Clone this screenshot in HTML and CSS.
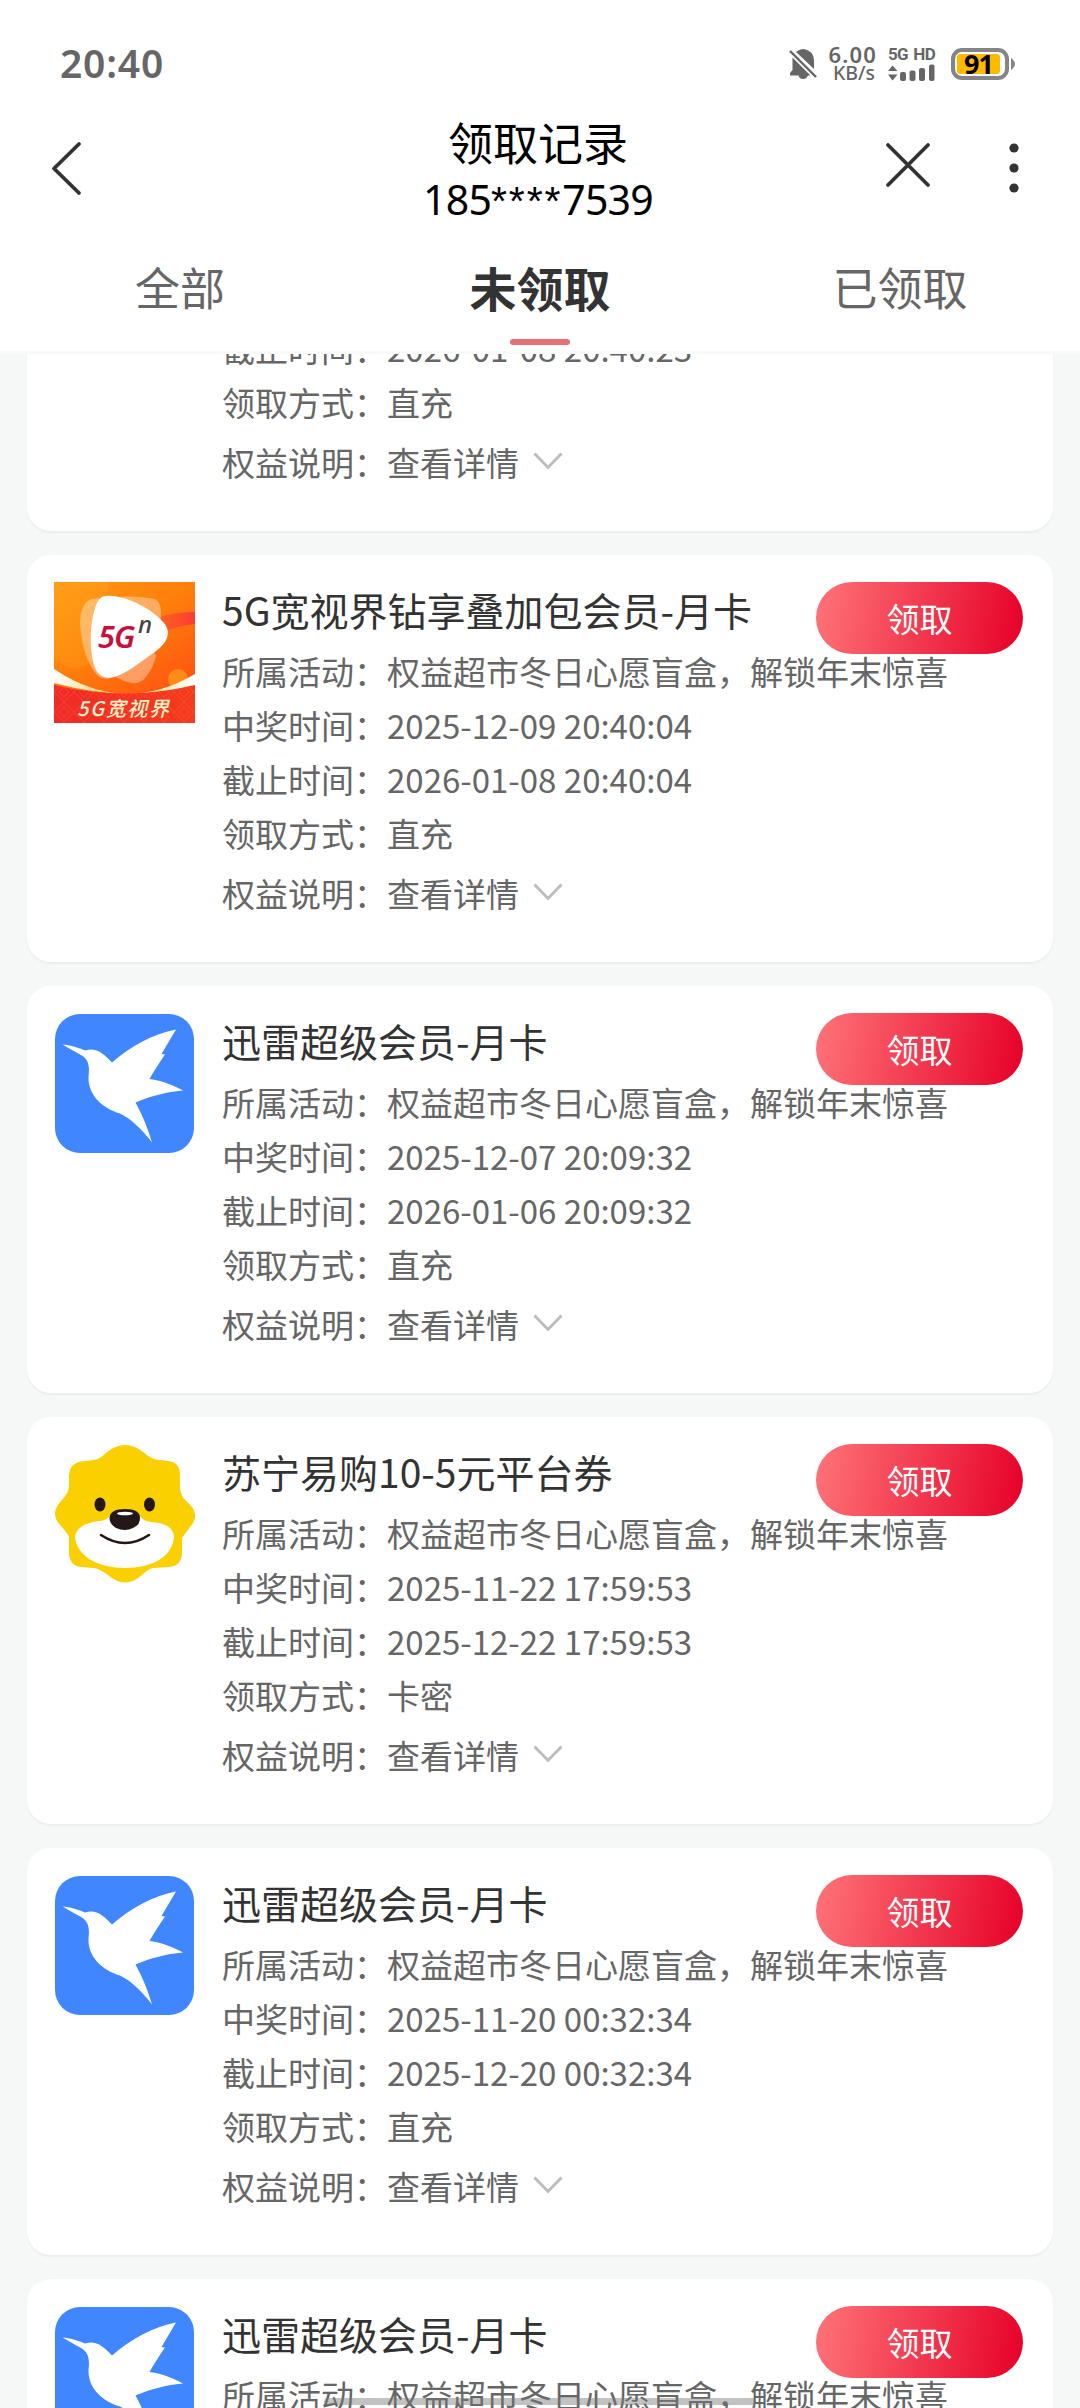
FILE: index.html
```html
<!DOCTYPE html>
<html lang="zh-CN">
<head>
<meta charset="utf-8">
<title>领取记录</title>
<link rel="stylesheet" href="styles.css">
</head>
<body>
<svg class="defs" aria-hidden="true">
  <defs>
    <symbol id="bird" viewBox="0 0 141 141">
      <rect x="1" y="1" width="139" height="139" rx="25" fill="#4086ff"/>
      <path fill="#fff" d="M8.500 31.500C17 32 25 35 31 37.500C42 34 49 40 58 49.500C77 33 99 21 122 16.500L107.500 41L111 41.500C106 49 100 58 95.500 66C109 68 119 72 129 77.500C112 79 97 83 81.500 89.500C89 103 94 116 98 129.500C87 115 77 106 66 100.500C48 95 34 82 34.500 64C36 52 34 46 27 42Q16 36 8.500 31.500Z"/>
    </symbol>
    <symbol id="chev" viewBox="0 0 30 18"><path d="M1.500 1.500L15 15.500L28.500 1.500" fill="none" stroke="#bcbcbc" stroke-width="2.900"/></symbol>
  </defs>
</svg>
<div class="screen">
  <header class="header">
    <div class="status">
      <span class="clock">20:40</span>
      <div class="indicators">
        <svg class="bell" viewBox="0 0 28 32"><path fill="#666" d="M6.500 4.500Q10 1 15 1Q24.500 3 25 12V21L7 4ZM3.500 9.500L21.500 27.500H19Q17.500 31 14 31Q10.500 31 9.500 27.500H1V25L3.500 22Z"/><path d="M1 3L27 29" stroke="#666" stroke-width="2.400"/></svg>
        <div class="speed"><b>6.00</b><span>KB/s</span></div>
        <div class="net">
          <div class="net-names"><span>5G</span><span>HD</span></div>
          <svg class="bars" viewBox="0 0 47 17" fill="#666"><path d="M0 7L4.500 1.500L9.500 7ZM0 10.500H9.500L4.500 16.500Z"/><rect x="12" y="8" width="6" height="9" rx="2"/><rect x="21.500" y="6.500" width="6" height="10.500" rx="2"/><rect x="31" y="4" width="6" height="13" rx="2"/><rect x="41" y="0.500" width="5.500" height="16.500" rx="2"/></svg>
        </div>
        <div class="battery"><span class="level">91</span></div>
        <svg class="tip" viewBox="0 0 4 12"><path d="M0 0Q4 3 4 6Q4 9 0 12Z" fill="#858585"/></svg>
      </div>
    </div>
    <nav class="nav">
      <svg class="back" viewBox="0 0 32 56"><path d="M28 4L3 28.500L28 53" fill="none" stroke="#333" stroke-width="3.800" stroke-linecap="round" stroke-linejoin="round"/></svg>
      <div class="heading"><h1>领取记录</h1><p>185<span class="mask">****</span>7539</p></div>
      <div class="actions">
        <svg class="close" viewBox="0 0 46 46"><path d="M3 3L43 43M43 3L3 43" stroke="#333" stroke-width="3.800" stroke-linecap="round"/></svg>
        <svg class="more" viewBox="0 0 10 52" fill="#333"><circle cx="5" cy="6" r="4.600"/><circle cx="5" cy="26" r="4.600"/><circle cx="5" cy="46" r="4.600"/></svg>
      </div>
    </nav>
    <div class="tabs"><span>全部</span><span class="active">未领取</span><span>已领取</span></div>
  </header>

  <main class="list">
    <article class="card partial">
      <div class="info">
        <p>截止时间：2026-01-08 20:40:23</p>
        <p>领取方式：直充</p>
        <p class="more-row">权益说明：查看详情<svg class="chev"><use href="#chev"/></svg></p>
      </div>
    </article>

    <article class="card">
      <svg class="logo" viewBox="0 0 141 141">
        <defs>
          <linearGradient id="orange" x1="0" y1="0" x2=".7" y2="1"><stop offset="0" stop-color="#ff9a16"/><stop offset=".5" stop-color="#ff7d0b"/><stop offset="1" stop-color="#ff4e13"/></linearGradient>
          <linearGradient id="ribbon"><stop offset="0" stop-color="#fff"/><stop offset=".4" stop-color="#ffd36b"/><stop offset=".75" stop-color="#ffe9a8"/><stop offset="1" stop-color="#fff"/></linearGradient>
          <linearGradient id="base"><stop offset="0" stop-color="#ef2a27"/><stop offset="1" stop-color="#f63b1b"/></linearGradient>
          <linearGradient id="streak"><stop offset="0" stop-color="#ff6a14" stop-opacity="0"/><stop offset="1" stop-color="#fb3b38"/></linearGradient>
          <pattern id="weave" width="20" height="20" patternUnits="userSpaceOnUse"><path d="M0 10L10 0L20 10L10 20ZM5 10L10 5L15 10L10 15Z" fill="none" stroke="#ff7052" stroke-opacity=".35"/></pattern>
        </defs>
        <path fill="url(#orange)" d="M0 0H141V141H0Z"/>
        <path fill="#ffb01d" opacity=".25" d="M0 0H55C50 30 30 50 40 78Q20 95 0 76Z"/>
        <path fill="url(#streak)" d="M60 55Q100 30 141 30V42Q105 45 70 75Z"/>
        <circle cx="124" cy="97" r="10" fill="#ffa01e" opacity=".7"/>
        <path fill="url(#ribbon)" d="M0 87Q70 134 141 92V106Q70 120 0 101Z"/>
        <path fill="url(#base)" d="M0 103Q70 120 141 103V141H0Z"/>
        <path fill="url(#weave)" d="M0 103Q70 120 141 103V141H0Z"/>
        <path fill="#fff" opacity=".35" d="M38 17Q26 20 26 43Q29 77 43 93Q52 101 65 92L103 56Q112 22 101 17Q78 12 38 17Z"/>
        <path fill="#fff" opacity=".35" d="M57 92Q82 108 91 96Q99 87 102 74L85 38L47 57Z"/>
        <path fill="#fff" d="M52 14C67 12 97 25 110 41C118 51 113 61 101 70C86 80 72 92 60 95C50 98 42 92 40 83C34 61 37 32 44 19Q47 14 52 14Z"/>
        <text class="logo-5g" x="44" y="66">5G</text><text class="logo-n" x="84" y="51">n</text>
        <text class="logo-name" x="23" y="134" textLength="92">5G宽视界</text>
      </svg>
      <div class="info">
        <h2>5G宽视界钻享叠加包会员-月卡</h2>
        <p>所属活动：权益超市冬日心愿盲盒，解锁年末惊喜</p>
        <p>中奖时间：2025-12-09 20:40:04</p>
        <p>截止时间：2026-01-08 20:40:04</p>
        <p>领取方式：直充</p>
        <p class="more-row">权益说明：查看详情<svg class="chev"><use href="#chev"/></svg></p>
      </div>
      <button class="claim">领取</button>
    </article>

    <article class="card">
      <svg class="logo"><use href="#bird"/></svg>
      <div class="info">
        <h2>迅雷超级会员-月卡</h2>
        <p>所属活动：权益超市冬日心愿盲盒，解锁年末惊喜</p>
        <p>中奖时间：2025-12-07 20:09:32</p>
        <p>截止时间：2026-01-06 20:09:32</p>
        <p>领取方式：直充</p>
        <p class="more-row">权益说明：查看详情<svg class="chev"><use href="#chev"/></svg></p>
      </div>
      <button class="claim">领取</button>
    </article>

    <article class="card">
      <svg class="logo" viewBox="0 0 141 141">
        <path fill="#fbd000" d="M53 8Q71 -6 89 8Q96 14 102 15.500L114 17Q126 18 126 31V43Q126 51 132 57Q148 70 136 83L128 94V110Q127 122 115 123L99 124Q94 125 88 131Q71 146 54 131Q46 125 40 124L27 123Q16 122 15 110V93Q14 90 7 82Q-5 70 7 57Q15 49 15 42V31Q16 19 27 17.500L40 16Q46 15 53 8Z"/>
        <path fill="#fff" d="M56 72Q51 77 45 77Q22 80 21 93C23 113 45 124 71 124C98 124 119 113 120 92Q118 79 97 78Q89 77 86 72Z"/>
        <ellipse cx="46" cy="60.500" rx="5.500" ry="7" fill="#231815"/><ellipse cx="95.500" cy="60.500" rx="5.500" ry="7" fill="#231815"/>
        <path fill="#231815" d="M55.500 74Q56 65 71 65Q86 65 86 74Q86 81 79 84Q71 88 62 84Q55.500 80 55.500 74Z"/>
        <ellipse cx="71" cy="69.500" rx="8" ry="1.800" fill="#fff"/>
        <path d="M47 91Q71 107 95 91" fill="none" stroke="#231815" stroke-width="2.600" stroke-linecap="round"/>
      </svg>
      <div class="info">
        <h2>苏宁易购10-5元平台券</h2>
        <p>所属活动：权益超市冬日心愿盲盒，解锁年末惊喜</p>
        <p>中奖时间：2025-11-22 17:59:53</p>
        <p>截止时间：2025-12-22 17:59:53</p>
        <p>领取方式：卡密</p>
        <p class="more-row">权益说明：查看详情<svg class="chev"><use href="#chev"/></svg></p>
      </div>
      <button class="claim">领取</button>
    </article>

    <article class="card">
      <svg class="logo"><use href="#bird"/></svg>
      <div class="info">
        <h2>迅雷超级会员-月卡</h2>
        <p>所属活动：权益超市冬日心愿盲盒，解锁年末惊喜</p>
        <p>中奖时间：2025-11-20 00:32:34</p>
        <p>截止时间：2025-12-20 00:32:34</p>
        <p>领取方式：直充</p>
        <p class="more-row">权益说明：查看详情<svg class="chev"><use href="#chev"/></svg></p>
      </div>
      <button class="claim">领取</button>
    </article>

    <article class="card">
      <svg class="logo"><use href="#bird"/></svg>
      <div class="info">
        <h2>迅雷超级会员-月卡</h2>
        <p>所属活动：权益超市冬日心愿盲盒，解锁年末惊喜</p>
      </div>
      <button class="claim">领取</button>
    </article>
  </main>
  <div class="home-bar"></div>
</div>
</body>
</html>
```
FILE: styles.css
```css
* { box-sizing: border-box; }
body { margin: 0; font-family: "Noto Sans CJK SC", sans-serif; background: #f6f8f8; }
h1, h2, p { margin: 0; font-weight: 400; }
svg { display: block; flex: none; }
.defs { position: absolute; width: 0; height: 0; }
.screen { position: relative; display: flex; flex-direction: column; width: 1080px; height: 2408px; overflow: hidden; }

.header { flex: none; height: 354px; background: #fff; border-bottom: 3px solid #f8fafa; }
.status { display: flex; justify-content: space-between; align-items: center; height: 128px; padding: 0 65px 0 60px; color: #666; font-family: "Noto Sans", sans-serif; }
.clock { font-size: 39px; font-weight: 600; line-height: 1; letter-spacing: .8px; padding-bottom: 4px; }
.indicators { display: flex; align-items: center; }
.bell { width: 28px; height: 32px; margin-right: 10px; }
.speed { display: flex; flex-direction: column; align-items: flex-end; width: 50px; margin-right: 11px; padding-bottom: 1px; }
.speed b { font-size: 22px; font-weight: 600; line-height: 19px; letter-spacing: 1.2px; }
.speed span { font-size: 19.500px; font-weight: 500; line-height: 18px; margin-right: 2px; }
.net { width: 47px; margin-right: 16px; padding-bottom: 1px; }
.net-names { display: flex; justify-content: space-between; font: 700 17px/17px Roboto, sans-serif; letter-spacing: -.7px; }
.bars { width: 47px; height: 17px; margin-top: 1px; }
.battery { display: flex; width: 58px; height: 32px; padding: 2px; border: 4px solid #858585; border-radius: 11px; }
.level { width: 43px; height: 20px; border-radius: 3px; background: #ffb900; color: #000; font-size: 27px; font-weight: 700; line-height: 20px; text-align: center; letter-spacing: -1px; }
.tip { width: 4px; height: 12px; margin-left: 2px; }

.nav { display: flex; justify-content: space-between; height: 104px; padding: 0 61px 0 51px; }
.back { width: 32px; height: 56px; margin-top: 12px; }
.heading { width: 300px; margin-left: 108px; text-align: center; color: #000; }
h1 { font-size: 45px; line-height: 60px; margin-top: -16px; }
.heading p { font-family: "Noto Sans", sans-serif; font-size: 41px; line-height: 50px; margin-top: 2px; letter-spacing: -.8px; }
.heading .mask { font-family: "Liberation Sans", sans-serif; letter-spacing: 1.850px; }
.actions { display: flex; width: 134px; justify-content: space-between; }
.close { width: 46px; height: 46px; margin-top: 14px; }
.more { width: 10px; height: 52px; margin-top: 14px; }

.tabs { display: grid; grid-template-columns: repeat(3, 1fr); height: 119px; }
.tabs span { text-align: center; font-size: 45px; line-height: 110px; color: #666; }
.tabs .active { color: #333; font-size: 47px; font-weight: 700; }
.tabs .active::after { content: ""; display: block; width: 60px; height: 6px; margin: -3px auto 0; border-radius: 3px; background: #e57078; }

.list { display: flex; flex-direction: column; gap: 24px; padding: 0 27px; }
.card { display: flex; flex: none; height: 407px; padding: 27px 30px 27px 27px; background: #fff; border-radius: 24px; box-shadow: 0 2px 2px rgba(0,0,0,.045); }
.logo { width: 141px; height: 141px; margin-right: 27px; }
.info { width: 0; white-space: nowrap; color: #666; font-size: 33px; }
.info h2 { color: #333; font-size: 39px; line-height: 58px; margin-top: -2px; margin-bottom: 6px; }
.info p { height: 54px; line-height: 54px; }
.info .more-row { display: flex; align-items: center; margin-top: 6px; }
.chev { width: 30px; height: 18px; margin-left: 14px; margin-top: -3px; }
.claim { width: 207px; height: 72px; margin-left: auto; padding: 0; border: 0; border-radius: 36px; background: linear-gradient(100deg, #ff7478, #e60027); color: #fff; font: 33px/72px "Noto Sans CJK SC", sans-serif; }
.partial { height: 177px; padding: 0 195px; border-radius: 0 0 24px 24px; overflow: hidden; }
.partial .info { margin-top: -33px; }

.logo-5g { font: italic 600 31px "Noto Sans", sans-serif; fill: #c8103c; letter-spacing: -1px; }
.logo-n { font: italic 500 24px "Noto Sans", sans-serif; fill: #444; }
.logo-name { font: italic 500 20px "Noto Sans CJK SC", sans-serif; fill: #fff1c9; }

.home-bar { position: absolute; left: 324px; top: 2398px; width: 432px; height: 7px; border-radius: 4px; background: rgba(120,120,120,.45); }
```
